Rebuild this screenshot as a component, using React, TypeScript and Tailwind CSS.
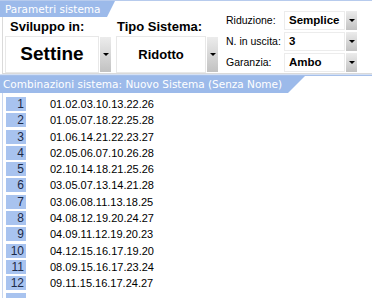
import React from "react";

const combos = [
  "01.02.03.10.13.22.26",
  "01.05.07.18.22.25.28",
  "01.06.14.21.22.23.27",
  "02.05.06.07.10.26.28",
  "02.10.14.18.21.25.26",
  "03.05.07.13.14.21.28",
  "03.06.08.11.13.18.25",
  "04.08.12.19.20.24.27",
  "04.09.11.12.19.20.23",
  "04.12.15.16.17.19.20",
  "08.09.15.16.17.23.24",
  "09.11.15.16.17.24.27",
  "",
];

const arial = { fontFamily: '"Liberation Sans", Arial, sans-serif' };
const dejavu = { fontFamily: '"DejaVu Sans", Verdana, sans-serif' };

function DropBtn({ className }: { className: string }) {
  return (
    <div className={"flex items-center justify-center bg-gradient-to-b from-[#ececec] to-[#c2c2c2] " + className}>
      <div className="w-0 h-0 border-l-[3px] border-r-[3px] border-t-[3px] border-l-transparent border-r-transparent border-t-black" />
    </div>
  );
}

function SmallSelect({ value }: { value: string }) {
  return (
    <div className="flex h-[19px] gap-[1px]">
      <div className="w-[61px] border border-[#ececec] bg-white flex items-center pl-[4px] text-[11.5px] font-bold text-black">
        {value}
      </div>
      <DropBtn className="w-[11px] h-[19px]" />
    </div>
  );
}

export default function App() {
  return (
    <div className="w-[372px] h-[298px] bg-white overflow-hidden flex flex-col" style={arial}>
      {/* Parametri sistema */}
      <div className="h-[75px] border-t border-[#b7cbed] flex">
        <div className="flex flex-col w-[222px]">
          <div
            className="h-[16px] w-[115px] bg-[#9cbaea] text-white text-[10.5px] leading-[16px] pl-[5px] [clip-path:polygon(0_0,100%_0,calc(100%-8px)_100%,0_100%)]"
            style={dejavu}
          >
            Parametri sistema
          </div>
          <div className="flex flex-1 ml-[2px] border-l border-b border-[#dadada]">
            <div className="flex flex-col w-[112px] pl-[2px]">
              <div className="h-[18px] pt-[3px] pl-[5px] text-[13px] leading-[14px] font-bold text-black">Sviluppo in:</div>
              <div className="flex gap-[1px] mt-[1px]">
                <div className="w-[94px] h-[37px] border border-[#e8e8e8] bg-white flex items-center justify-center text-[19px] font-bold text-black">
                  Settine
                </div>
                <DropBtn className="w-[11px] h-[35px] mt-[1px]" />
              </div>
            </div>
            <div className="flex flex-col w-[106px] pl-[1px]">
              <div className="h-[18px] pt-[3px] pl-[1px] text-[13px] leading-[14px] font-bold text-black">Tipo Sistema:</div>
              <div className="flex gap-[1px] mt-[1px]">
                <div className="w-[90px] h-[37px] border border-[#e8e8e8] bg-white flex items-center justify-center text-[13px] font-bold text-black">
                  Ridotto
                </div>
                <DropBtn className="w-[11px] h-[35px] mt-[1px]" />
              </div>
            </div>
          </div>
        </div>
        <div className="flex-1 flex flex-col gap-[2px] pt-[10px] pl-[4px] border-b border-[#dadada]">
          {[
            ["Riduzione:", "Semplice"],
            ["N. in uscita:", "3"],
            ["Garanzia:", "Ambo"],
          ].map(([label, value]) => (
            <div key={label} className="flex items-center">
              <div className="w-[58px] text-[10.5px] text-black">{label}</div>
              <SmallSelect value={value} />
            </div>
          ))}
        </div>
      </div>

      <div className="h-[3px] border-t border-[#d4e0f4]" />

      {/* Combinazioni */}
      <div className="flex-1 flex flex-col border-t border-[#a6c0ea]">
        <div
          className="h-[17px] w-[305px] bg-[#9cbaea] text-white text-[10.5px] leading-[17px] pl-[3px] [clip-path:polygon(0_0,100%_0,calc(100%-17px)_100%,0_100%)]"
          style={dejavu}
        >
          Combinazioni sistema: Nuovo Sistema (Senza Nome)
        </div>
        <div className="flex-1 ml-[2px] border-l border-[#c9d7ee] pt-[4px] flex flex-col">
          {combos.map((c, i) => (
            <div key={i} className="h-[16.3px] flex items-start shrink-0">
              <div className="ml-[3px] w-[20px] h-[14px] bg-[#a8c3ef] text-right pr-[2px] text-[12px] leading-[14px] text-[#1c2a48]">
                {c ? i + 1 : ""}
              </div>
              <div className="ml-[24px] text-[11px] leading-[14px] text-black">{c}</div>
            </div>
          ))}
        </div>
      </div>
    </div>
  );
}
